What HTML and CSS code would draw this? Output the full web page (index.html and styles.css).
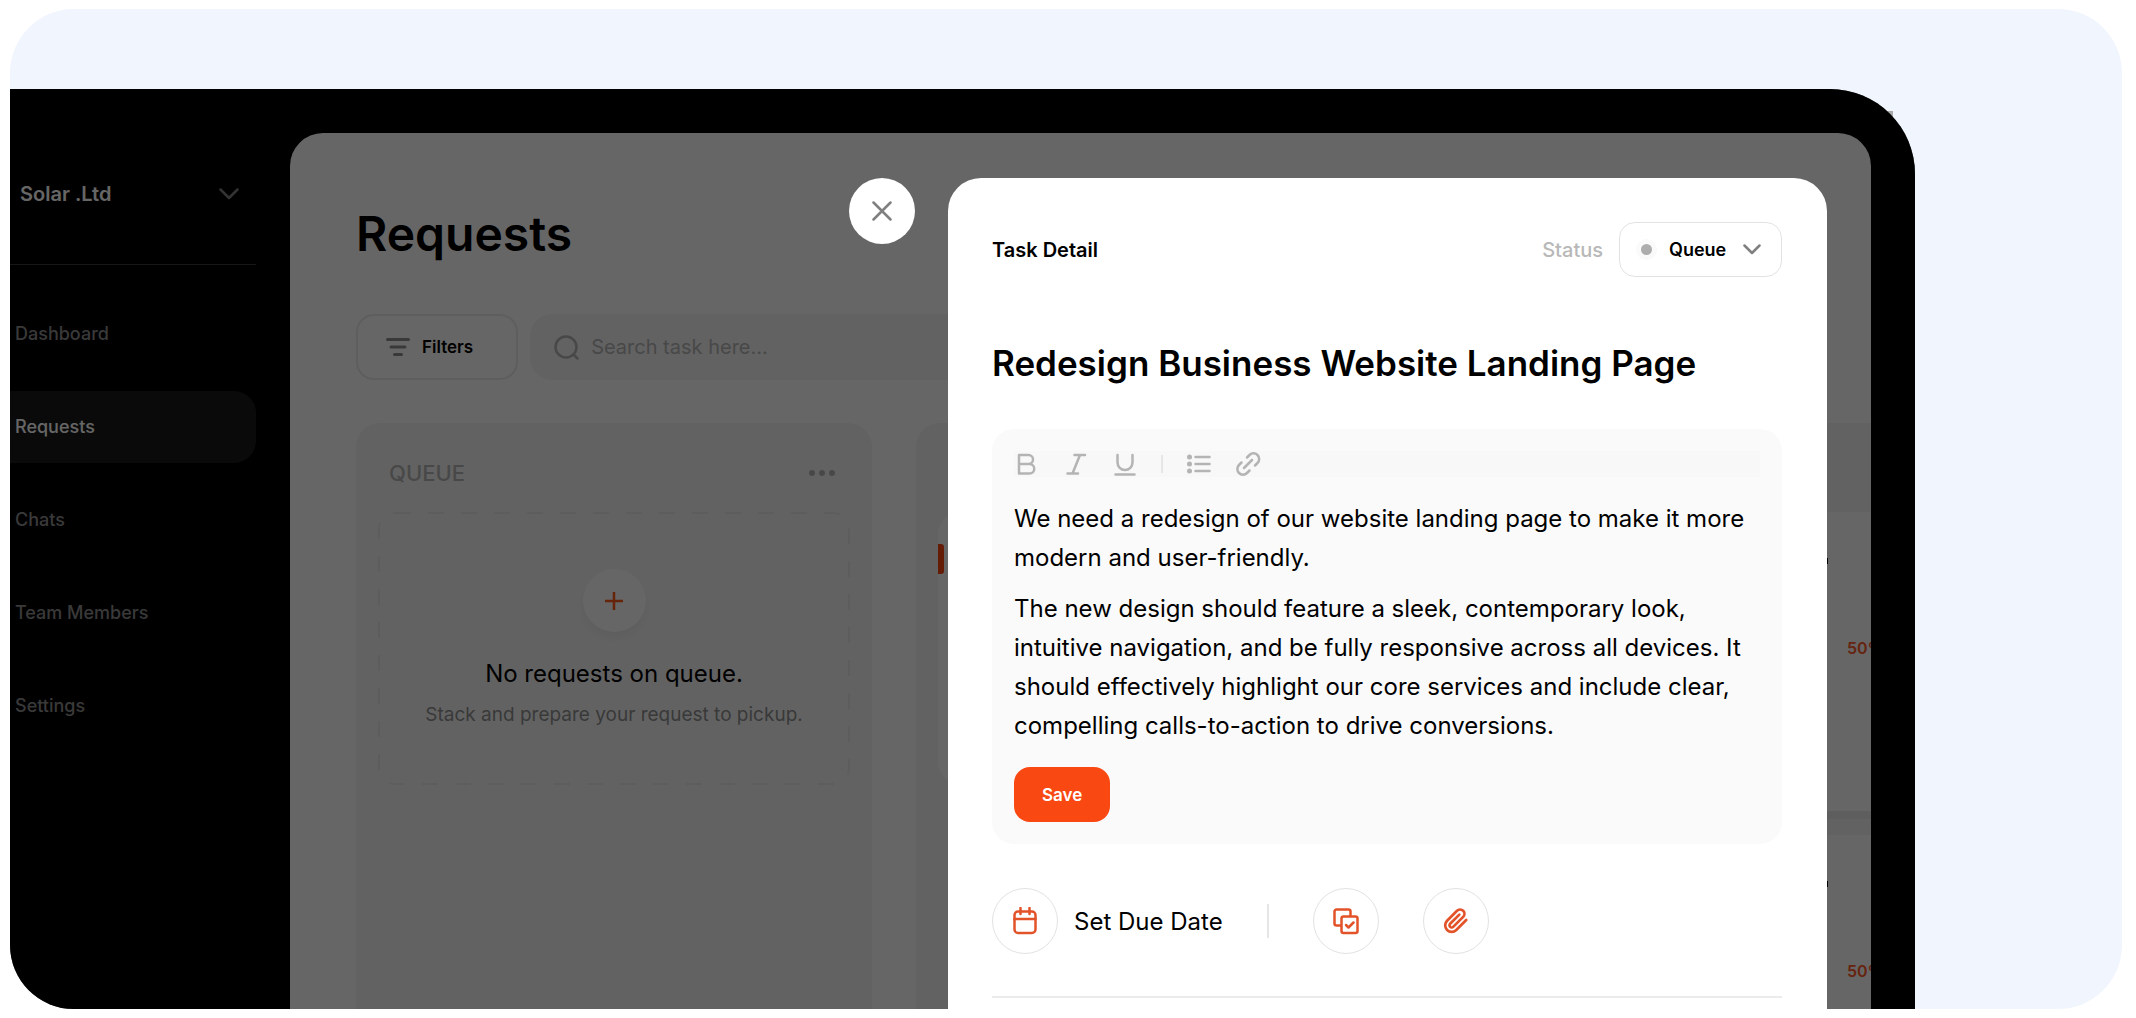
FILE: index.html
```html
<!DOCTYPE html>
<html lang="en">
	<head>
		<meta charset="UTF-8" />
		<meta name="viewport" content="width=device-width, initial-scale=1.0" />
		<title>Requests</title>
		<link rel="stylesheet" href="styles.css">
	</head>
	<body>
		<div class="frame">
			<span class="corner-mark" aria-hidden="true"></span>
			<div class="device">
				<aside class="sidebar">
					<button class="workspace" type="button">
						Solar .Ltd
						<svg class="chevron" viewBox="0 0 20 12"><path d="M1.5 1.5 10 10l8.5-8.5" /></svg>
					</button>
					<nav class="nav">
						<a href="#" class="nav-link">Dashboard</a>
						<a href="#" class="nav-link active">Requests</a>
						<a href="#" class="nav-link">Chats</a>
						<a href="#" class="nav-link">Team Members</a>
						<a href="#" class="nav-link">Settings</a>
					</nav>
				</aside>

				<main class="main">
					<h1 class="page-title">Requests</h1>
					<div class="toolbar">
						<button class="filters" type="button">
							<svg class="filters-icon" viewBox="0 0 24 18"><path d="M1.5 1.5h21M5 9h14M8.500 16.500h7" /></svg>
							Filters
						</button>
						<label class="search">
							<svg class="search-icon" viewBox="0 0 25 25"><circle cx="12" cy="12" r="10.500" /><path d="m19.500 19.500 4 4" /></svg>
							<input type="text" class="search-input" placeholder="Search task here..." aria-label="Search task" />
						</label>
					</div>

					<div class="board">
						<section class="column">
							<header class="column-head">
								<h2 class="column-title">QUEUE</h2>
								<button class="more" type="button" aria-label="More">
									<svg viewBox="0 0 26 6"><circle cx="3" cy="3" r="3" /><circle cx="13" cy="3" r="3" /><circle cx="23" cy="3" r="3" /></svg>
								</button>
							</header>
							<div class="empty">
								<svg class="empty-border"><rect x="1" y="1" rx="16" /></svg>
								<button class="add" type="button" aria-label="Add request">
									<svg viewBox="0 0 18 18"><path d="M9 0v18M0 9h18" /></svg>
								</button>
								<p class="empty-title">No requests on queue.</p>
								<p class="empty-text">Stack and prepare your request to pickup.</p>
							</div>
						</section>
						<section class="column">
							<header class="column-head"></header>
							<div class="card card-short"><span class="card-flag"></span></div>
						</section>
						<section class="column">
							<header class="column-head"></header>
							<div class="card">
								<span class="card-mark"></span>
								<span class="card-progress">50%</span>
							</div>
							<div class="card">
								<span class="card-mark"></span>
								<span class="card-progress">50%</span>
							</div>
						</section>
					</div>
				</main>

				<!-- task drawer -->
				<div class="overlay">
					<button class="close" type="button" aria-label="Close">
						<svg viewBox="0 0 20 20"><path d="m1.500 1.500 17 17M18.500 1.500l-17 17" /></svg>
					</button>
					<section class="drawer">
						<header class="drawer-head">
							<h2 class="drawer-label">Task Detail</h2>
							<label class="status-label" for="status">Status</label>
							<div class="status">
								<span class="status-dot"></span>
								<select class="status-select" id="status">
									<option>Queue</option>
								</select>
								<svg class="status-chevron" viewBox="0 0 18 11"><path d="M1.500 1.500 9 9l7.500-7.500" /></svg>
							</div>
						</header>

						<h3 class="task-title">Redesign Business Website Landing Page</h3>

						<div class="editor">
							<div class="editor-tools">
								<button class="tool" type="button" aria-label="Bold">
									<svg viewBox="0 0 26 26"><path d="M5 4h9.500a4.500 4.500 0 0 1 0 9H5zM5 13h10.500a4.500 4.500 0 0 1 0 9.500H5z" /></svg>
								</button>
								<button class="tool" type="button" aria-label="Italic">
									<svg viewBox="0 0 26 26"><path d="M11.500 4H22M4.500 22.500H15M17 4 9.500 22.500" /></svg>
								</button>
								<button class="tool" type="button" aria-label="Underline">
									<svg viewBox="0 0 26 26"><path d="M5.500 4v7.500a7.500 7.500 0 0 0 15 0V4M3.500 23.500h19" /></svg>
								</button>
								<span class="tool-divider"></span>
								<button class="tool" type="button" aria-label="List">
									<svg viewBox="0 0 26 26"><path d="M9.500 6h14M9.500 13h14M9.500 20h14" /><path class="bullets" d="M3.500 6h.01M3.500 13h.01M3.500 20h.01" /></svg>
								</button>
								<button class="tool" type="button" aria-label="Link">
									<svg viewBox="0 0 26 26"><path d="m9 17 8-8M12 6.500l2.500-2.500a5.600 5.600 0 0 1 8 8L20 14.500M6.500 11.500 4 14a5.600 5.600 0 0 0 8 8l2.500-2.500" /></svg>
								</button>
							</div>
							<div class="editor-text">
								<p>We need a redesign of our website landing page to make it more modern and user-friendly.</p>
								<p>The new design should feature a sleek, contemporary look, intuitive navigation, and be fully responsive across all devices. It should effectively highlight our core services and include clear, compelling calls-to-action to drive conversions.</p>
							</div>
							<button class="save" type="button">Save</button>
						</div>

						<div class="actions">
							<button class="due" type="button">
								<span class="round">
									<svg viewBox="0 0 26 28"><rect x="2.500" y="4.500" width="21" height="21.500" rx="3.500" /><path d="M2.500 12h21M8.500 1v6M17.500 1v6" /></svg>
								</span>
								Set Due Date
							</button>
							<span class="actions-divider"></span>
							<button class="round" type="button" aria-label="Subtasks">
								<svg viewBox="0 0 26 28"><path d="M7.500 18.500H3.500a2 2 0 0 1-2-2v-12a2 2 0 0 1 2-2h12a2 2 0 0 1 2 2V9" /><rect x="8.500" y="9.500" width="16" height="16.500" rx="2" /><path d="m13 18 2.500 2.500 5-5" /></svg>
							</button>
							<button class="round" type="button" aria-label="Attach file">
								<svg viewBox="0 0 24 24"><path d="m21.440 11.050-9.190 9.190a6 6 0 0 1-8.490-8.490l9.190-9.190a4 4 0 0 1 5.660 5.660l-9.200 9.190a2 2 0 0 1-2.830-2.830l8.490-8.480" /></svg>
							</button>
						</div>
						<hr class="drawer-rule" />
					</section>
				</div>
			</div>
		</div>
	</body>
</html>
```
FILE: styles.css
```css
* {
	box-sizing: border-box;
}
body {
	margin: 0;
	padding: 9px 14px 9px 10px;
	background: #fff;
	color: #000;
	font-family: Inter, "Liberation Sans", sans-serif;
	font-size: 18px;
}
h1, h2, h3, p {
	margin: 0;
}
button, input, select {
	font: inherit;
	color: inherit;
	border: 0;
	padding: 0;
	background: none;
}
svg {
	display: block;
	fill: none;
	stroke: currentColor;
	stroke-width: 2.5;
	stroke-linecap: round;
	stroke-linejoin: round;
}
.frame {
	position: relative;
	display: flex;
	height: calc(100vh - 18px);
	padding: 80px 207px 0 0;
	border-radius: 64px;
	background: #f1f5fd;
	overflow: hidden;
}
.corner-mark {
	position: absolute;
	top: 102px;
	right: 229px;
	width: 6px;
	height: 6px;
	background: #a9a9a9;
}
.device {
	position: relative;
	flex: 1;
	display: flex;
	min-width: 0;
	border-radius: 0 85px 0 0;
	background: #000;
	overflow: hidden;
}

/* sidebar */
.sidebar {
	width: 280px;
	padding: 72px 34px 0 0;
	color: #fff;
}
.workspace {
	display: flex;
	align-items: center;
	justify-content: space-between;
	width: 100%;
	height: 66px;
	padding: 0 17px 0 10px;
	font-size: 20px;
	font-weight: 600;
}
.chevron {
	width: 20px;
	height: 12px;
	color: #808080;
}
.nav {
	display: flex;
	flex-direction: column;
	gap: 21px;
	margin-top: 37px;
	padding-top: 33px;
	border-top: 1px solid #3a3a3a;
}
.nav-link {
	padding: 0 5px;
	line-height: 72px;
	font-weight: 500;
	color: #909090;
	text-decoration: none;
}
.nav-link.active {
	border-radius: 0 22px 22px 0;
	background: #1a1a1a;
	color: #fff;
}

/* board */
.main {
	flex: 1;
	min-width: 0;
	margin: 44px 44px 0 0;
	padding: 73px 0 0 66px;
	border-radius: 33px 33px 0 0;
	background: #fff;
	overflow: hidden;
}
.page-title {
	font-size: 48px;
	line-height: 56px;
	font-weight: 600;
}
.toolbar {
	display: flex;
	gap: 12px;
	margin: 52px 66px 43px 0;
}
.filters {
	display: flex;
	align-items: center;
	gap: 12px;
	height: 66px;
	padding: 0 43px 0 28px;
	border: 2px solid #eaeaea;
	border-radius: 18px;
	font-weight: 600;
	font-size: 17px;
}
.filters-icon {
	width: 24px;
	height: 18px;
	stroke-width: 3;
	color: #909090;
}
.search {
	flex: 1;
	display: flex;
	align-items: center;
	gap: 12px;
	padding: 0 24px;
	border-radius: 22px;
	background: #f6f6f6;
	color: #b4b4b4;
}
.search-icon {
	width: 25px;
	height: 25px;
}
.search-input {
	flex: 1;
	font-size: 20px;
	outline: none;
}
.search-input::placeholder {
	color: #b4b4b4;
}
.board {
	display: flex;
	gap: 44px;
}
.column {
	flex: none;
	width: 516px;
	min-height: 100vh;
	padding: 0 22px;
	border-radius: 24px;
	background: #f6f6f6;
}
.column-head {
	display: flex;
	align-items: center;
	justify-content: space-between;
	height: 89px;
	padding: 11px 15px 0 11px;
}
.column-title {
	font-size: 22px;
	font-weight: 500;
	color: #b4b4b4;
}
.more {
	color: #b4b4b4;
}
.more svg {
	width: 26px;
	height: 6px;
	fill: currentColor;
	stroke: none;
}
.empty {
	position: relative;
	display: flex;
	flex-direction: column;
	align-items: center;
	height: 273px;
	padding-top: 57px;
}
.empty-border {
	position: absolute;
	top: 0;
	left: 0;
	width: 100%;
	height: 100%;
	color: #e9e9e9;
	stroke-width: 2;
	stroke-linecap: butt;
	stroke-dasharray: 16 17;
}
.empty-border rect {
	width: calc(100% - 2px);
	height: calc(100% - 2px);
}
.add {
	display: grid;
	place-items: center;
	width: 63px;
	height: 63px;
	border-radius: 50%;
	background: #fff;
	color: #ff5a1a;
	box-shadow: 0 6px 12px rgba(0, 0, 0, 0.05);
}
.add svg {
	width: 18px;
	height: 18px;
	stroke-linecap: butt;
}
.empty-title {
	margin-top: 25px;
	font-size: 24px;
	line-height: 34px;
}
.empty-text {
	margin-top: 12px;
	font-size: 19px;
	line-height: 24px;
	color: #909090;
}
.card {
	display: flex;
	flex-direction: column;
	align-items: flex-start;
	height: 299px;
	margin-bottom: 24px;
	padding: 46px 0 0 328px;
	border-radius: 22px;
	background: #fff;
	box-shadow: 0 8px 0 #ececec;
}
.card-short {
	height: 272px;
	padding: 32px 0 0;
	box-shadow: none;
}
.card-flag {
	width: 6px;
	height: 30px;
	border-radius: 0 3px 3px 0;
	background: #fa4813;
}
.card-mark {
	width: 2px;
	height: 6px;
	background: #000;
}
.card-progress {
	margin: 74px 0 0 21px;
	font-size: 16px;
	line-height: 20px;
	font-weight: 600;
	color: #ff5a2a;
}

/* drawer */
.overlay {
	position: absolute;
	inset: 0;
	display: flex;
	justify-content: flex-end;
	gap: 33px;
	padding: 89px 88px 0 0;
	background: rgba(0, 0, 0, 0.6);
}
.close {
	display: grid;
	place-items: center;
	width: 66px;
	height: 66px;
	border-radius: 50%;
	background: #fff;
	color: #808080;
}
.close svg {
	width: 20px;
	height: 20px;
}
.drawer {
	width: 879px;
	padding: 44px 45px 0 44px;
	border-radius: 33px 33px 0 0;
	background: #fff;
}
.drawer-head {
	display: flex;
	align-items: center;
	gap: 16px;
}
.drawer-label {
	flex: 1;
	font-size: 20px;
	font-weight: 600;
}
.status-label {
	font-size: 20px;
	font-weight: 500;
	color: #b8b8b8;
}
.status {
	position: relative;
	width: 163px;
}
.status-select {
	display: block;
	width: 100%;
	height: 55px;
	padding-left: 49px;
	border: 1px solid #e2e2e2;
	border-radius: 16px;
	appearance: none;
	font-weight: 600;
}
.status-dot {
	position: absolute;
	top: 17px;
	left: 17px;
	width: 21px;
	height: 21px;
	border: 5px solid #fafafa;
	border-radius: 50%;
	background: #adadad;
}
.status-chevron {
	position: absolute;
	top: 22px;
	right: 21px;
	width: 18px;
	height: 11px;
	color: #808080;
}
.task-title {
	margin: 62px 0 42px;
	font-size: 35px;
	line-height: 48px;
	font-weight: 600;
}
.editor {
	padding: 22px;
	border-radius: 22px;
	background: #fafafa;
}
.editor-tools {
	display: flex;
	align-items: center;
	gap: 23px;
	background: #f8f8f8;
	color: #b4b4b4;
}
.tool svg {
	width: 26px;
	height: 26px;
}
.tool .bullets {
	stroke-width: 5;
}
.tool-divider {
	width: 2px;
	height: 18px;
	background: #e6e6e6;
}
.editor-text {
	display: flex;
	flex-direction: column;
	gap: 12px;
	margin: 22px 0;
	font-size: 24px;
	line-height: 39px;
}
.save {
	display: block;
	height: 55px;
	padding: 0 28px;
	border-radius: 16px;
	background: #fa4813;
	color: #fff;
	font-size: 17px;
	font-weight: 600;
}
.actions {
	display: flex;
	align-items: center;
	gap: 44px;
	margin: 44px 0 42px;
}
.due {
	display: flex;
	align-items: center;
	gap: 16px;
	font-size: 24px;
}
.round {
	display: grid;
	place-items: center;
	width: 66px;
	height: 66px;
	border: 1px solid #e2e2e2;
	border-radius: 50%;
	color: #e2532a;
}
.round svg {
	width: 26px;
	height: 28px;
}
.actions-divider {
	width: 2px;
	height: 34px;
	background: #e6e6e6;
}
.drawer-rule {
	margin: 0;
	border: 0;
	border-top: 2px solid #ebebeb;
}
```
